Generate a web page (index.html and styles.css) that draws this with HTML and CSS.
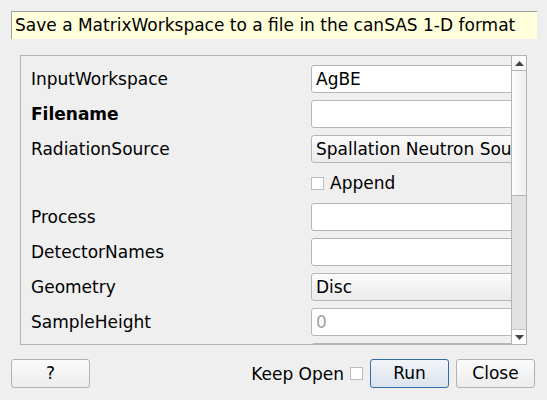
FILE: index.html
```html
<!DOCTYPE html>
<html>
<head>
<meta charset="utf-8">
<link rel="stylesheet" href="styles.css">
</head>
<body>
<div class="dialog">
  <div class="tip">Save a MatrixWorkspace to a file in the canSAS 1-D format</div>
  <div class="panel">
    <div class="content">
      <div class="row"><span class="label">InputWorkspace</span><div class="field">AgBE</div></div>
      <div class="row"><span class="label bold">Filename</span><div class="field"></div></div>
      <div class="row"><span class="label">RadiationSource</span><div class="field combo">Spallation Neutron Source</div></div>
      <div class="row short"><span class="label"></span><div class="check-wrap"><span class="check"></span><span>Append</span></div></div>
      <div class="row"><span class="label">Process</span><div class="field"></div></div>
      <div class="row"><span class="label">DetectorNames</span><div class="field"></div></div>
      <div class="row"><span class="label">Geometry</span><div class="field combo">Disc</div></div>
      <div class="row"><span class="label">SampleHeight</span><div class="field placeholder">0</div></div>
      <div class="row"><span class="label"></span><div class="field"></div></div>
    </div>
    <div class="scrollbar">
      <div class="arrow up"><svg width="9" height="5" viewBox="0 0 9 5"><path d="M0 5 L4.5 0 L9 5 Z" fill="#444"/></svg></div>
      <div class="handle"></div>
      <div class="track"></div>
      <div class="arrow down"><svg width="9" height="5" viewBox="0 0 9 5"><path d="M0 0 L4.5 5 L9 0 Z" fill="#444"/></svg></div>
    </div>
  </div>
  <div class="buttons">
    <div class="btn">?</div>
    <div class="spacer"></div>
    <span class="keep">Keep Open</span>
    <span class="check keep-check"></span>
    <div class="btn run">Run</div>
    <div class="btn">Close</div>
  </div>
</div>
</body>
</html>
```

FILE: styles.css
```css
html, body {
  margin: 0;
  padding: 0;
  background: #efefef;
  font-family: "DejaVu Sans", sans-serif;
  font-size: 17px;
  color: #000;
}
.dialog {
  width: 547px;
  height: 400px;
  overflow: hidden;
}
.tip {
  box-sizing: border-box;
  margin: 11px 0 0 11px;
  width: 526px;
  height: 28px;
  background: #ffffdc;
  border-top: 1px solid #a0a0a0;
  border-left: 1px solid #a0a0a0;
  padding-left: 3px;
  line-height: 26px;
  white-space: nowrap;
}
.panel {
  box-sizing: border-box;
  margin: 16px 0 0 20px;
  width: 507px;
  height: 290px;
  border: 1px solid #b4b4b4;
  display: flex;
  overflow: hidden;
}
.content {
  flex: 1;
  overflow: hidden;
  padding: 9px 0 0 10px;
  display: flex;
  flex-direction: column;
  gap: 7px;
}
.row {
  display: flex;
  align-items: center;
  height: 28px;
  flex-shrink: 0;
}
.row.short {
  height: 26px;
}
.label {
  width: 280px;
  flex-shrink: 0;
  white-space: nowrap;
}
.bold {
  font-weight: bold;
}
.field {
  box-sizing: border-box;
  width: 240px;
  flex-shrink: 0;
  height: 28px;
  background: #fff;
  border: 1px solid #b6b6b6;
  border-radius: 3px;
  padding-left: 4px;
  line-height: 26px;
  white-space: nowrap;
  overflow: hidden;
}
.combo {
  background: linear-gradient(#fbfbfb, #ebebeb);
}
.placeholder {
  color: #a2a2a2;
}
.check-wrap {
  display: flex;
  align-items: center;
  gap: 6px;
}
.check {
  box-sizing: border-box;
  display: inline-block;
  width: 13px;
  height: 13px;
  background: #fff;
  border: 1px solid #bcbcbc;
  flex-shrink: 0;
}
.scrollbar {
  width: 14px;
  flex-shrink: 0;
  border-left: 1px solid #b4b4b4;
  display: flex;
  flex-direction: column;
  background: #e2e2e2;
}
.arrow {
  height: 14px;
  background: #fafafa;
  display: flex;
  align-items: center;
  justify-content: center;
  flex-shrink: 0;
}
.arrow.up {
  border-bottom: 1px solid #b4b4b4;
}
.arrow.down {
  border-top: 1px solid #c4c4c4;
  background: #fff;
}
.handle {
  height: 124px;
  flex-shrink: 0;
  background: linear-gradient(90deg, #fcfcfc, #efefef);
  border-bottom: 1px solid #b4b4b4;
}
.track {
  flex: 1;
}
.buttons {
  display: flex;
  align-items: center;
  margin: 14px 12px 0 11px;
  height: 29px;
}
.btn {
  box-sizing: border-box;
  width: 79px;
  height: 29px;
  border: 1px solid #b2b2b2;
  border-radius: 3px;
  background: linear-gradient(#fbfbfb, #ececec);
  text-align: center;
  line-height: 27px;
}
.btn + .btn {
  margin-left: 7px;
}
.spacer {
  flex: 1;
}
.keep {
  white-space: nowrap;
}
.keep-check {
  margin: 0 7px 0 6px;
}
.btn.run {
  border-color: #2f6ea9;
  background: linear-gradient(#f2f5f8, #dbe3ec);
}
```
